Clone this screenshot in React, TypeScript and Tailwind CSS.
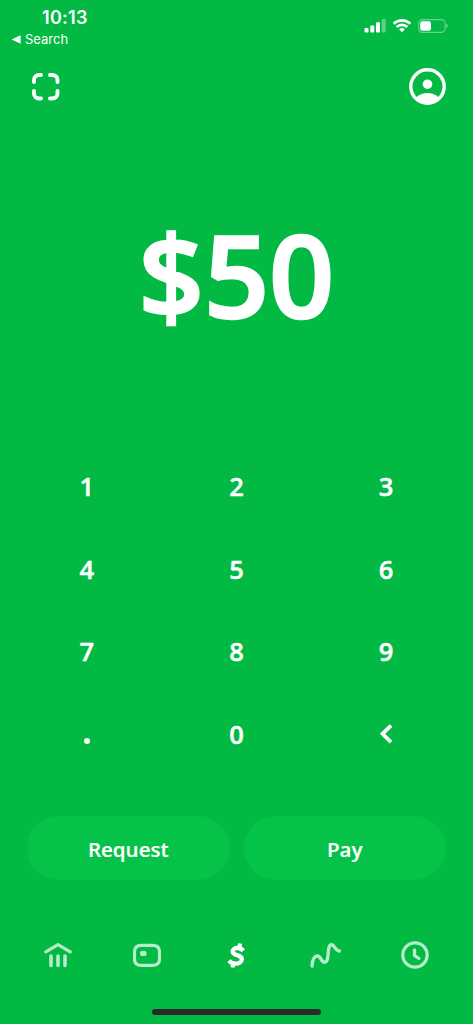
import type { ReactNode } from 'react';

const KEYS = ['1', '2', '3', '4', '5', '6', '7', '8', '9', '.', '0', '<'];

const StatusBar = () => (
  <div className="flex h-[50px] justify-between font-['Inter',sans-serif]">
    <div className="pl-[11px] pt-[7px]">
      <p className="pl-[31px] text-[18px] font-semibold leading-[22px] tracking-[0.3px]">
        10:13
      </p>
      <p className="flex items-center gap-1 text-[13px] leading-5">
        <svg width="10" height="9" viewBox="0 0 10 9" fill="currentColor">
          <path d="M0.600 4.500 9.600 0.300v8.400z" />
        </svg>
        Search
      </p>
    </div>
    <div className="mt-[19px] flex h-[13px] gap-[7px] pr-[25px]">
      <svg width="22" height="14" viewBox="0 0 22 14" fill="currentColor">
        <rect x="0.500" y="9" width="4" height="4.500" rx="1" />
        <rect x="6.300" y="6.500" width="4" height="7" rx="1" />
        <rect x="12" y="3.300" width="4" height="10.200" rx="1" />
        <rect x="17.700" y="0" width="4" height="13.500" rx="1" opacity="0.35" />
      </svg>
      <svg
        width="18"
        height="14"
        viewBox="0.5 0 18 14"
        fill="none"
        stroke="currentColor"
        strokeWidth="2.600"
      >
        <path d="M1.200 4.700a12 12 0 0 1 16.600 0" />
        <path d="M4.200 8a7.600 7.600 0 0 1 10.600 0" />
        <path
          d="M6.700 10.400a4 4 0 0 1 5.600 0L9.500 13.300z"
          fill="currentColor"
          stroke="none"
        />
      </svg>
      <svg width="30" height="14" viewBox="0 0 30 14" fill="none">
        <rect
          x="0.600"
          y="0.600"
          width="26.500"
          height="12.800"
          rx="3.800"
          stroke="currentColor"
          strokeWidth="1.100"
          opacity="0.4"
        />
        <rect x="2.200" y="2.200" width="10.800" height="9.600" rx="2" fill="currentColor" />
        <path d="M28.300 4.800c1.900.8 1.900 3.400 0 4.200z" fill="currentColor" opacity="0.45" />
      </svg>
    </div>
  </div>
);

const ScanIcon = () => (
  <svg
    width="28"
    height="28"
    viewBox="0 0 28 28"
    fill="none"
    stroke="currentColor"
    strokeWidth="3.900"
    strokeLinecap="round"
  >
    <path d="M2 9V7a5 5 0 0 1 5-5h2" />
    <path d="M18 2h2.500a5 5 0 0 1 5 5v2" />
    <path d="M25.500 18v2.500a5 5 0 0 1-5 5H18" />
    <path d="M9 25.500H7a5 5 0 0 1-5-5V18" />
  </svg>
);

const ProfileIcon = () => (
  <svg width="37" height="37" viewBox="0 0 37 37" fill="none">
    <circle cx="18.500" cy="18.500" r="16.700" stroke="currentColor" strokeWidth="3.400" />
    <circle cx="18.500" cy="16.200" r="4.800" fill="currentColor" />
    <path
      d="M7.800 29c3-2.700 6.500-4 10.700-4s7.700 1.300 10.700 4c-2.500 4-6.200 6-10.700 6s-8.200-2-10.700-6z"
      fill="currentColor"
    />
  </svg>
);

const BankIcon = () => (
  <svg
    width="28"
    height="28"
    viewBox="0 0 28 28"
    fill="none"
    stroke="currentColor"
    strokeLinecap="round"
    strokeLinejoin="round"
  >
    <path d="M1.800 10.900 14 3.700 26.200 10.900" strokeWidth="3.200" />
    <path d="M7 15v9.400M14 15v9.400M21 15v9.400" strokeWidth="3.600" />
  </svg>
);

const CardIcon = () => (
  <svg width="28" height="28" viewBox="0 0 28 28" fill="none">
    <path
      d="M8.500 4.400h11c5 0 7 2 7 6.500v7c0 4.500-2 6.500-7 6.500h-11c-5 0-7-2-7-6.500v-7c0-4.500 2-6.500 7-6.500z"
      stroke="currentColor"
      strokeWidth="3.200"
    />
    <rect x="7" y="9.800" width="6.600" height="5.200" rx="2.600" fill="currentColor" />
  </svg>
);

const CashIcon = () => (
  <svg
    width="28"
    height="28"
    viewBox="0 0 28 28"
    fill="none"
    stroke="currentColor"
    strokeLinejoin="round"
  >
    <path
      d="M21.200 9.800C19.700 7.900 17.800 7 15.600 7c-3 0-5 1.400-5 3.500 0 4.500 9.200 2.700 9.200 7.400 0 3-2.900 4.700-6.300 4.700-2.700 0-4.900-1-6.500-3"
      strokeWidth="4.400"
    />
    <path d="M17.400 6.500 18.100 2.500M10.500 26.500l.7-4" strokeWidth="4.200" />
  </svg>
);

const InvestIcon = () => (
  <svg
    width="32"
    height="28"
    viewBox="0 0 32 28"
    fill="none"
    stroke="currentColor"
    strokeWidth="3.400"
    strokeLinecap="round"
    strokeLinejoin="round"
  >
    <path d="M2 25C2.500 18.500 4.300 15 7.300 15c4 0 3.500 6.200 7.200 6.200C20.500 21.200 16 3.800 21.500 3.800c3.400 0 3 5.400 8 6.200" />
  </svg>
);

const ClockIcon = () => (
  <svg width="28" height="28" viewBox="0 0 28 28" fill="none" stroke="currentColor">
    <circle cx="14" cy="14" r="12.200" strokeWidth="3.200" />
    <path
      d="M13.500 8.800v5.800l4.400 2.700"
      strokeWidth="3.300"
      strokeLinecap="round"
      strokeLinejoin="round"
    />
  </svg>
);

const TABS: { name: string; icon: ReactNode; active?: boolean }[] = [
  { name: 'Banking', icon: <BankIcon /> },
  { name: 'Card', icon: <CardIcon /> },
  { name: 'Cash', icon: <CashIcon />, active: true },
  { name: 'Investing', icon: <InvestIcon /> },
  { name: 'Activity', icon: <ClockIcon /> },
];

const Key = ({ value }: { value: string }) => (
  <button
    className="flex items-center justify-center pb-px text-[25.5px] font-semibold leading-none [-webkit-text-stroke:0.5px_white]"
    aria-label={value === '<' ? 'Delete' : value}
  >
    {value === '<' ? (
      <svg
        width="14"
        height="20"
        viewBox="0 0 14 20"
        fill="none"
        stroke="currentColor"
        strokeWidth="3.800"
      >
        <path d="M12 1.500 3.500 9.800l8.500 8.300" />
      </svg>
    ) : value === '.' ? (
      <span className="mt-[13px] size-1.5 rounded-full bg-white" />
    ) : (
      value
    )}
  </button>
);

const ActionButton = ({ label }: { label: string }) => (
  <button className="h-16 flex-1 rounded-full bg-[#04c348] pt-0.5 text-[20.5px] font-semibold [-webkit-text-stroke:0.2px_white]">
    {label}
  </button>
);

export default function App() {
  return (
    <div className="flex h-[1024px] w-[473px] flex-col overflow-hidden bg-[#02b944] font-['Open_Sans',sans-serif] text-white">
      <StatusBar />

      <header className="flex h-[73px] items-center justify-between pl-8 pr-[27px]">
        <ScanIcon />
        <ProfileIcon />
      </header>

      <div className="flex h-[323px] justify-center pt-[91px]">
        <p className="text-[114px] font-semibold leading-[120px] [-webkit-text-stroke:2.5px_white]">
          $50
        </p>
      </div>

      <div className="grid h-[330px] grid-cols-3 grid-rows-4 px-3">
        {KEYS.map((key) => (
          <Key key={key} value={key} />
        ))}
      </div>

      <div className="mt-10 flex gap-3.5 px-[27px]">
        <ActionButton label="Request" />
        <ActionButton label="Pay" />
      </div>

      <nav className="mt-[60px] grid h-[30px] grid-cols-5 px-[13px]">
        {TABS.map((tab) => (
          <button
            key={tab.name}
            aria-label={tab.name}
            className={`flex items-center justify-center ${
              tab.active ? 'text-white' : 'text-[#b5edc8]'
            }`}
          >
            {tab.icon}
          </button>
        ))}
      </nav>

      <div className="mx-auto mt-[39px] h-1.5 w-[169px] rounded-full bg-[#292b2a]" />
    </div>
  );
}
